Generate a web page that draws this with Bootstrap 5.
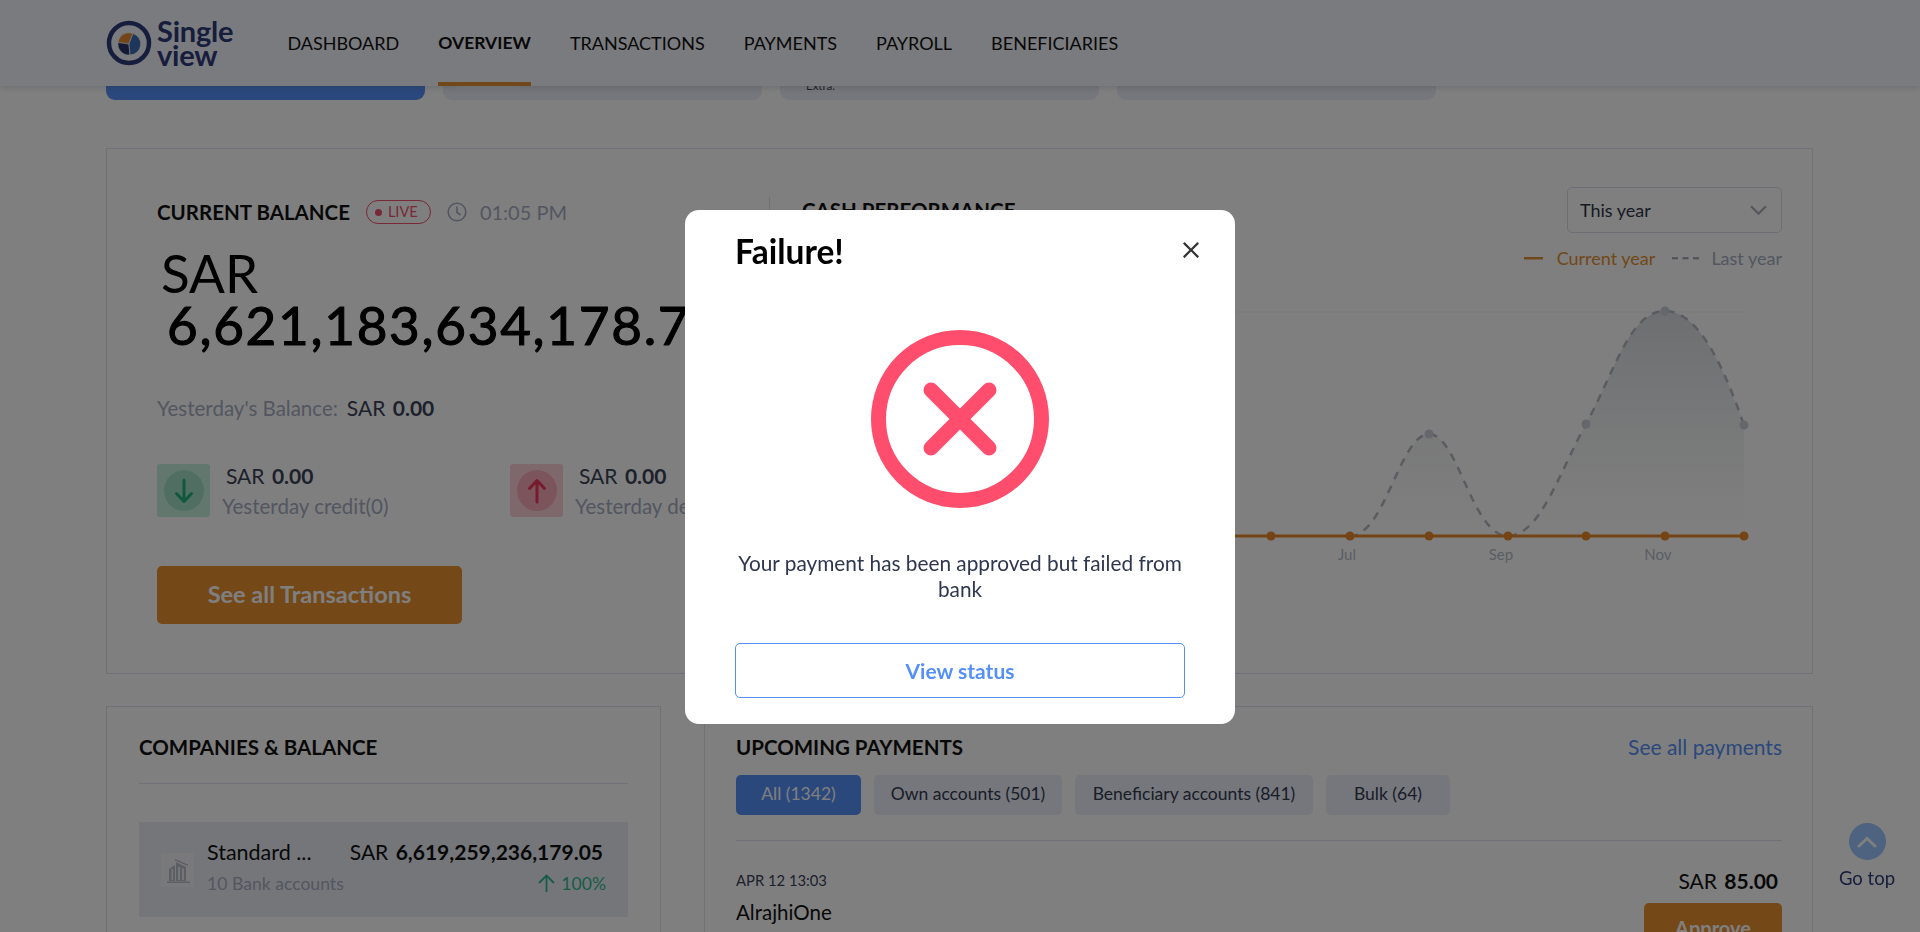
<!DOCTYPE html>
<html lang="en">
<head>
<meta charset="utf-8">
<title>Single view</title>
<link href="https://cdn.jsdelivr.net/npm/bootstrap@5.3.0/dist/css/bootstrap.min.css" rel="stylesheet">
<style>
html,body{height:100%;overflow:hidden}
body{font-family:"Lato","Noto Sans",sans-serif;background:#fff;color:#1c2340}
.sv-nav{height:86px;background:#f4f6fd;padding:0 0 0 106px;box-shadow:0 2px 6px rgba(60,70,100,.18);position:relative;z-index:5;align-items:stretch;justify-content:flex-start;flex-wrap:nowrap}
.sv-brand{display:flex;align-items:center;gap:5px;padding:0;margin:0 54px 0 0;color:#2f3b78}
.sv-brand-text{font-weight:700;font-size:29px;line-height:24px;letter-spacing:-.2px}
.sv-nav .navbar-nav{gap:39px;align-items:stretch}
.sv-nav.navbar-expand .navbar-nav .nav-link{font-size:18px;color:#111;padding:4px 0 0;display:flex;align-items:center;border-bottom:4px solid transparent}
.sv-nav.navbar-expand .navbar-nav .nav-link.active{font-size:17.5px;font-weight:700;color:#111;border-bottom-color:#e39032}
.sv-wrap{padding:0 107px 0 106px}
.sv-tabs{height:14px;overflow:hidden;gap:18px}
.sv-tab{width:319px;height:14px;background:#eaeef8;border-radius:0 0 9px 9px;overflow:hidden}
.sv-tab-blue{background:#5590f8}
.sv-tab-line{height:3px;background:#f4f6fb;width:62px;margin:0 0 0 14px}
.sv-tab-text{font-size:11.5px;line-height:12px;margin:-6px 0 0 26px;color:#444}
.sv-balance{border:1px solid #dde2ee;border-radius:0;margin-top:48px;height:526px;flex-direction:row;padding-top:48px;background:#fff}
.sv-left{width:662px;padding-left:50px;flex:none}
.sv-right{flex:1;border-left:1px solid #dde2ee;padding:3px 30px 0 32px;min-width:0}
.sv-h{font-size:20.5px;font-weight:700;color:#111;line-height:26px;margin:0}
.sv-right .sv-h{margin-top:-3px}
.sv-live{border:1.5px solid #f0506e;border-radius:12px;color:#f0506e;height:24px;width:65px;font-size:14.5px;gap:6px;padding-left:8px}
.sv-dot{width:7px;height:7px;border-radius:50%;background:#f0506e}
.sv-time{font-size:20px;color:#a6adc2;gap:13px}
.sv-big{font-size:53px;line-height:52px;color:#000;white-space:nowrap;margin-top:20px}
.sv-big-num{padding-left:10px;letter-spacing:1.7px;-webkit-text-stroke:1.1px #000}
.sv-sub{font-size:20.5px;color:#a6adc2}
.sv-val{font-size:21px;color:#3a4258;word-spacing:2px}
.sv-val b{font-weight:700}
.sv-ybal{margin-top:44px;gap:9px;line-height:26px}
.sv-flow{margin-top:43px}
.sv-flowitem{width:353px;gap:12px;flex:none}
.sv-sq{width:53px;height:53px;border-radius:3px;flex:none}
.sv-sq-g{background:#c5eedd}
.sv-sq-r{background:#fcd0d8}
.sv-round{width:40px;height:41px;border-radius:50%}
.sv-sq-g .sv-round{background:#a3dcc4}
.sv-sq-r .sv-round{background:#f7a9b8}
.sv-flowtext{line-height:30px;margin-top:-3px}
.sv-flowtext .sv-val{padding-left:4px}
.sv-cta{background:#ea9030;color:#fff;border:0;border-radius:5px;width:305px;height:58px;font-size:23.5px;font-weight:700;margin-top:45px;padding:0}
.sv-select{width:215px;height:46px;font-size:18px;padding:0 12px;color:#2f3548;border:1px solid #d8dde8;border-radius:5px;margin-top:-13px;--bs-form-select-bg-img:none;background-image:url("data:image/svg+xml,%3csvg xmlns='http://www.w3.org/2000/svg' viewBox='0 0 16 10'%3e%3cpath fill='none' stroke='%23a8acb4' stroke-width='2' d='M1 1l7 7 7-7'/%3e%3c/svg%3e");background-size:17px 11px;background-position:right 14px center}
.sv-legend{font-size:18px;margin-top:14px;height:22px;color:#a6adc2;gap:17px}
.sv-leg-cur{color:#e39032;gap:14px}
.sv-leg-last{gap:12px}
.sv-chart{display:block;width:980px;height:290px;margin-top:12px}
.sv-row2{margin-top:32px;gap:43px}
.sv-card{border:1px solid #dde2ee;border-radius:0;height:400px;background:#fff}
.sv-companies{width:555px;flex:none;padding:27px 32px}
.sv-upcoming{flex:1;padding:24px 30px 0 31px;min-width:0}
.sv-comp-head{padding-bottom:23px;border-bottom:1px solid #dde2ee}
.sv-comp-row{margin-top:38px;background:#eaedf5;height:95px;padding:0 22px;gap:13px}
.sv-comp-info{min-width:0;padding-bottom:4px}
.sv-bld{width:33px;height:34px;background:#f2f3f6;flex:none}
.sv-name{font-size:21.5px;color:#111;line-height:28px;margin-bottom:4px}
.sv-acc{font-size:17.6px;color:#a6adc2;line-height:28px}
.sv-amt{font-size:21px;color:#111;line-height:28px;word-spacing:2px}
.sv-amt-co{padding-right:3px}
.sv-pct{font-size:17.6px;color:#2fb98a;line-height:28px;gap:6px}
.sv-link{font-size:21px;color:#5590f8;text-decoration:none}
.sv-pills{gap:13px;margin-top:12px;padding-bottom:25px;border-bottom:1px solid #dde2ee}
.sv-pill{height:40px;font-size:17.5px;border:0;border-radius:5px;background:#eaeef8;color:#333a50;padding:0}
.sv-pill.btn-primary{background:#5590f8;color:#fff}
.sv-pay{padding-top:26px}
.sv-date{font-size:14.8px;color:#3a4258;line-height:26px}
.sv-payee{font-size:20.5px;color:#111;line-height:30px;margin-top:4px}
.sv-approve{background:#ea9030;color:#fff;border:0;border-radius:5px;width:138px;height:50px;font-size:20px;font-weight:700;margin-top:8px;padding:0}
.sv-gotop{position:fixed;right:23px;top:823px;width:60px;gap:6px;font-size:18.5px;color:#2f3b78;line-height:24px;text-align:center;white-space:nowrap}
.sv-gotop-c{width:37px;height:37px;border-radius:50%;background:#9cc6ff}
.fail-dialog{max-width:550px}
.fail-content{border:0;border-radius:14px;padding:0 0 26px;margin-top:2px}
.fail-head{padding:21px 35px 0 50px;border:0;align-items:flex-start}
.fail-title{font-size:33.5px;line-height:40px;font-weight:700;color:#000}
.fail-head .fail-close{width:18px;height:18px;padding:0;margin:10px 0 0 0;opacity:.8;background-size:18px}
.fail-body{padding:59px 50px 0;text-align:center}
.fail-text{font-size:20.8px;line-height:26px;color:#2e3650;margin:42px 0 41px}
.fail-btn{height:55px;border:1px solid #5590f8;color:#5590f8;background:#fff;font-size:21px;font-weight:700;border-radius:5px;width:100%;padding:0}
</style>
</head>
<body>
<nav class="navbar navbar-expand sv-nav">
  <a class="navbar-brand sv-brand" href="#">
    <svg width="46" height="46" viewBox="0 0 46 46" aria-hidden="true">
      <circle cx="23" cy="23" r="20" fill="none" stroke="#2f3b78" stroke-width="4.5"/>
      <path d="M23 24L12 22.5A11 11 0 0 1 27 13.5Z" fill="#e58c30" stroke="#f4f6fd" stroke-width=".7"/>
      <path d="M23 24L24 35A11 11 0 0 1 12 22.5Z" fill="#2a3468" stroke="#f4f6fd" stroke-width=".7"/>
      <path d="M23 24L27 13.5A11 11 0 0 1 24 35Z" fill="#3d6cb4" stroke="#f4f6fd" stroke-width=".7"/>
    </svg>
    <span class="sv-brand-text">Single<br>view</span>
  </a>
  <ul class="navbar-nav">
    <li class="nav-item d-flex"><a class="nav-link" href="#">DASHBOARD</a></li>
    <li class="nav-item d-flex"><a class="nav-link active" href="#">OVERVIEW</a></li>
    <li class="nav-item d-flex"><a class="nav-link" href="#">TRANSACTIONS</a></li>
    <li class="nav-item d-flex"><a class="nav-link" href="#">PAYMENTS</a></li>
    <li class="nav-item d-flex"><a class="nav-link" href="#">PAYROLL</a></li>
    <li class="nav-item d-flex"><a class="nav-link" href="#">BENEFICIARIES</a></li>
  </ul>
</nav>

<main class="sv-wrap">
  <div class="d-flex sv-tabs">
    <div class="sv-tab sv-tab-blue"></div>
    <div class="sv-tab"><div class="sv-tab-line"></div></div>
    <div class="sv-tab"><div class="sv-tab-text">Extra.</div></div>
    <div class="sv-tab"></div>
  </div>

  <section class="card sv-balance">
    <div class="sv-left">
      <div class="d-flex align-items-center">
        <h2 class="sv-h me-3">CURRENT BALANCE</h2>
        <span class="d-inline-flex align-items-center sv-live"><span class="sv-dot"></span>LIVE</span>
        <span class="d-inline-flex align-items-center sv-time ms-3">
          <svg width="20" height="20" viewBox="0 0 20 20" aria-hidden="true"><circle cx="10" cy="10" r="8.8" fill="none" stroke="currentColor" stroke-width="1.6"/><path d="M10 4.5V10.5L13.5 13" fill="none" stroke="currentColor" stroke-width="1.6"/></svg>
          01:05 PM
        </span>
      </div>
      <div class="sv-big">
        <div class="ps-1">SAR</div>
        <div class="sv-big-num">6,621,183,634,178.75</div>
      </div>
      <div class="d-flex sv-ybal">
        <span class="sv-sub">Yesterday's Balance:</span>
        <span class="sv-val">SAR <b>0.00</b></span>
      </div>
      <div class="d-flex sv-flow">
        <div class="d-flex sv-flowitem">
          <div class="sv-sq sv-sq-g d-flex align-items-center justify-content-center"><div class="sv-round d-flex align-items-center justify-content-center">
            <svg width="20" height="26" viewBox="0 0 20 26" aria-hidden="true"><path d="M10 2V23M2.5 15.5L10 23.5L17.5 15.5" fill="none" stroke="#22b07d" stroke-width="3" stroke-linecap="round" stroke-linejoin="round"/></svg></div></div>
          <div class="sv-flowtext"><div class="sv-val">SAR <b>0.00</b></div><div class="sv-sub">Yesterday credit(0)</div></div>
        </div>
        <div class="d-flex sv-flowitem">
          <div class="sv-sq sv-sq-r d-flex align-items-center justify-content-center"><div class="sv-round d-flex align-items-center justify-content-center">
            <svg width="20" height="26" viewBox="0 0 20 26" aria-hidden="true"><path d="M10 24V3M2.5 10.5L10 2.5L17.5 10.5" fill="none" stroke="#f0365f" stroke-width="3" stroke-linecap="round" stroke-linejoin="round"/></svg></div></div>
          <div class="sv-flowtext"><div class="sv-val">SAR <b>0.00</b></div><div class="sv-sub">Yesterday debit(0)</div></div>
        </div>
      </div>
      <button class="btn sv-cta" type="button">See all Transactions</button>
    </div>
    <div class="sv-right">
      <div class="d-flex justify-content-between align-items-start">
        <h2 class="sv-h">CASH PERFORMANCE</h2>
        <select class="form-select sv-select" aria-label="Period"><option>This year</option></select>
      </div>
      <div class="d-flex justify-content-end align-items-center sv-legend">
        <span class="sv-leg-cur d-inline-flex align-items-center"><svg width="19" height="3" aria-hidden="true"><rect width="19" height="2.5" fill="#e39032"/></svg>Current year</span>
        <span class="d-inline-flex align-items-center sv-leg-last"><svg width="27" height="3" aria-hidden="true"><path d="M0 1.2H27" stroke="#9aa0b0" stroke-width="2" stroke-dasharray="6 4.5"/></svg>Last year</span>
      </div>
      <svg class="sv-chart" viewBox="802 280 980 290" aria-label="Cash performance chart">
        <defs><linearGradient id="svfill" x1="0" y1="0" x2="0" y2="1"><stop offset="0" stop-color="#d6dade" stop-opacity=".9"/><stop offset="1" stop-color="#e4e6e8" stop-opacity="0"/></linearGradient></defs>
        <path d="M802 311H1744" stroke="#f6f6f8" stroke-width="1.5"/>
        <path d="M1350 535C1385 535 1400 433 1429 433C1458 433 1472 535 1508 535C1540 535 1560 470 1586 423C1615 370 1630 310 1665 310C1700 310 1725 370 1744 424V535Z" fill="url(#svfill)"/>
        <path d="M1350 535C1385 535 1400 433 1429 433C1458 433 1472 535 1508 535C1540 535 1560 470 1586 423C1615 370 1630 310 1665 310C1700 310 1725 370 1744 424" fill="none" stroke="#b4b9c2" stroke-width="2.5" stroke-dasharray="8 7"/>
        <g fill="#c8ced8"><circle cx="1429" cy="433" r="4.5"/><circle cx="1586" cy="423" r="4.5"/><circle cx="1665" cy="310" r="4.5"/><circle cx="1744" cy="424" r="4.5"/></g>
        <path d="M876 535H1744" stroke="#e9892a" stroke-width="3"/>
        <g fill="#e9892a"><circle cx="876" cy="535" r="4.5"/><circle cx="955" cy="535" r="4.5"/><circle cx="1034" cy="535" r="4.5"/><circle cx="1113" cy="535" r="4.5"/><circle cx="1192" cy="535" r="4.5"/><circle cx="1271" cy="535" r="4.5"/><circle cx="1350" cy="535" r="4.5"/><circle cx="1429" cy="535" r="4.5"/><circle cx="1508" cy="535" r="4.5"/><circle cx="1586" cy="535" r="4.5"/><circle cx="1665" cy="535" r="4.5"/><circle cx="1744" cy="535" r="4.5"/></g>
        <g font-family="Lato,sans-serif" font-size="15" fill="#b5bbc8" text-anchor="middle"><text x="1347" y="559">Jul</text><text x="1501" y="559">Sep</text><text x="1658" y="559">Nov</text></g>
      </svg>
    </div>
  </section>

  <div class="d-flex sv-row2">
    <section class="card sv-card sv-companies">
      <div class="sv-comp-head"><h2 class="sv-h">COMPANIES &amp; BALANCE</h2></div>
      <div class="d-flex align-items-center sv-comp-row">
        <div class="sv-bld d-flex align-items-center justify-content-center">
          <svg width="28" height="28" viewBox="0 0 28 28" aria-hidden="true"><g fill="#b8bcc6"><path d="M3 25.5H26V27H3z"/><path d="M12 6L22 11V25H12z"/><path d="M5 13L11 9V25H5z"/><path d="M11 3L24 8.5V10L11 4.5z"/></g><g fill="#eceef3"><path d="M14 11h2v13h-2zM18 12.5h2V24h-2zM7.5 13h1.5v11H7.5z"/></g></svg>
        </div>
        <div class="flex-grow-1 sv-comp-info">
          <div class="d-flex justify-content-between sv-name"><span>Standard ...</span><span class="sv-amt sv-amt-co">SAR <b>6,619,259,236,179.05</b></span></div>
          <div class="d-flex justify-content-between align-items-center"><span class="sv-acc">10 Bank accounts</span>
            <span class="d-inline-flex align-items-center sv-pct"><svg width="17" height="19" viewBox="0 0 17 19" aria-hidden="true"><path d="M8.5 18V1.5M1 9L8.5 1.5L16 9" fill="none" stroke="#2fb98a" stroke-width="1.8"/></svg>100%</span></div>
        </div>
      </div>
    </section>
    <section class="card sv-card sv-upcoming">
      <div class="d-flex justify-content-between align-items-center">
        <h2 class="sv-h">UPCOMING PAYMENTS</h2>
        <a class="sv-link" href="#">See all payments</a>
      </div>
      <div class="d-flex sv-pills">
        <button type="button" class="btn btn-primary sv-pill" style="width:125px">All (1342)</button>
        <button type="button" class="btn sv-pill" style="width:188px">Own accounts (501)</button>
        <button type="button" class="btn sv-pill" style="width:238px">Beneficiary accounts (841)</button>
        <button type="button" class="btn sv-pill" style="width:124px">Bulk (64)</button>
      </div>
      <div class="d-flex justify-content-between sv-pay">
        <div><div class="sv-date">APR 12 13:03</div><div class="sv-payee">AlrajhiOne</div></div>
        <div class="text-end"><div class="sv-amt pe-1">SAR <b>85.00</b></div><button type="button" class="btn sv-approve">Approve</button></div>
      </div>
    </section>
  </div>
</main>

<a class="sv-gotop d-flex flex-column align-items-center text-decoration-none" href="#">
  <span class="sv-gotop-c d-flex align-items-center justify-content-center"><svg width="20" height="12" viewBox="0 0 20 12" aria-hidden="true"><path d="M2 10L10 2.5L18 10" fill="none" stroke="#fff" stroke-width="3" stroke-linecap="round"/></svg></span>
  Go top
</a>

<div class="modal-backdrop fade show"></div>
<div class="modal fade show d-block" role="dialog" aria-modal="true">
  <div class="modal-dialog modal-dialog-centered fail-dialog">
    <div class="modal-content fail-content">
      <div class="modal-header fail-head">
        <h1 class="modal-title fail-title">Failure!</h1>
        <button type="button" class="btn-close fail-close" aria-label="Close"></button>
      </div>
      <div class="modal-body fail-body">
        <svg width="178" height="178" viewBox="0 0 178 178" aria-hidden="true" class="d-block mx-auto"><circle cx="89" cy="89" r="81.5" fill="none" stroke="#ff4d6d" stroke-width="15"/><path d="M60 60L118 118M118 60L60 118" fill="none" stroke="#ff4d6d" stroke-width="15" stroke-linecap="round"/></svg>
        <p class="fail-text">Your payment has been approved but failed from<br>bank</p>
        <button type="button" class="btn fail-btn">View status</button>
      </div>
    </div>
  </div>
</div>
<script src="https://cdn.jsdelivr.net/npm/bootstrap@5.3.0/dist/js/bootstrap.bundle.min.js"></script>
</body>
</html>
